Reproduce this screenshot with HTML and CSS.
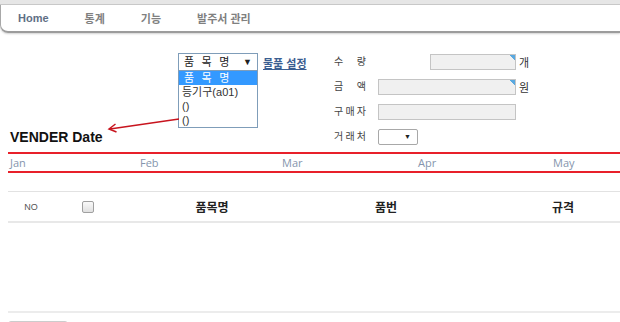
FILE: index.html
```html
<!DOCTYPE html>
<html lang="ko">
<head>
    <meta charset="UTF-8">
    <title>VENDER Date</title>
    <link rel="stylesheet" href="styles.css">
</head>
<body>

<div class="topbar"></div>
<nav class="menu">
    <a class="on">Home</a>
    <a>통계</a>
    <a>기능</a>
    <a>발주서 관리</a>
</nav>

<div class="page">
    <!-- 품목 선택 + 입력 -->
    <div class="head">
        <h2 class="title">VENDER Date</h2>
        <div class="pick">
            <div class="combo"><span>품목명</span><span class="caret">▼</span></div>
            <ul class="list">
                <li class="sel">품목명</li>
                <li>등기구(a01)</li>
                <li>()</li>
                <li>()</li>
            </ul>
        </div>
        <a class="setlink">물품 설정</a>
        <div class="fields">
            <span class="lbl"><span>수</span><span>량</span></span>
            <input class="box qty" type="text">
            <span class="unit">개</span>

            <span class="lbl"><span>금</span><span>액</span></span>
            <input class="box" type="text">
            <span class="unit">원</span>

            <span class="lbl"><span>구</span><span>매</span><span>자</span></span>
            <input class="box plain" type="text">
            <span></span>

            <span class="lbl"><span>거</span><span>래</span><span>처</span></span>
            <div class="vendor">▼</div>
            <span></span>
        </div>
        <svg class="arrow" width="200" height="110" viewBox="0 0 200 110">
            <line x1="171" y1="86" x2="102" y2="96" stroke="#c8141e" stroke-width="1.5"/>
            <polyline points="107.5,91 101,96 108.5,99" fill="none" stroke="#c8141e" stroke-width="1.5"/>
        </svg>
    </div>

    <!-- 월 -->
    <div class="timeline">
        <span style="width:130px">Jan</span>
        <span style="width:142px">Feb</span>
        <span style="width:136px">Mar</span>
        <span style="width:135px">Apr</span>
        <span>May</span>
    </div>

    <table class="grid">
        <colgroup>
            <col style="width:50px"><col style="width:60px"><col style="width:188px"><col style="width:160px"><col>
        </colgroup>
        <thead>
            <tr>
                <th class="no">NO</th>
                <th><span class="chk"></span></th>
                <th>품목명</th>
                <th>품번</th>
                <th class="last">규격</th>
            </tr>
        </thead>
        <tbody>
            <tr class="empty"><td colspan="5"></td></tr>
        </tbody>
    </table>

    <button class="btn"></button>
</div>

</body>
</html>
```

FILE: styles.css
```css
html, body {
    overflow: hidden;
}
body {
    margin: 0;
    font-family: "Liberation Sans", "Noto Sans CJK KR", sans-serif;
    background-color: #fff;
    color: #333;
}
.topbar {
    height: 4px;
    background-color: #e6e6e6;
    border-bottom: 1px solid #cacaca;
}
.menu {
    height: 26px;
    border-left: 1px solid #a8a8a8;
    border-bottom: 2px solid #9c9c9c;
    border-bottom-left-radius: 8px;
    box-shadow: 0 1px 2px rgba(0, 0, 0, 0.18);
    display: flex;
    align-items: center;
}
.menu a {
    padding: 0 18px;
    font-size: 11px;
    font-weight: bold;
    color: #808080;
}
.menu a.on {
    color: #5f6f85;
    padding-left: 17px;
}
.page {
    padding-left: 8px;
}
.head {
    position: relative;
    display: flex;
    align-items: flex-start;
    padding-top: 20px;
}
.title {
    width: 170px;
    align-self: flex-end;
    margin: 0;
    padding-left: 2px;
    box-sizing: border-box;
    font-size: 14px;
    line-height: 16px;
    color: #111;
}
.pick {
    position: relative;
    width: 85px;
}
.combo {
    width: 80px;
    height: 18px;
    box-sizing: border-box;
    border: 1px solid #7f9db9;
    padding-left: 5px;
    display: flex;
    justify-content: space-between;
    font-size: 11px;
    line-height: 16px;
    letter-spacing: 7.5px;
    color: #222;
}
.caret {
    letter-spacing: 0;
    font-size: 9px;
    margin-right: 5px;
}
.list {
    position: absolute;
    top: 17px;
    left: 0;
    width: 80px;
    box-sizing: border-box;
    margin: 0;
    padding: 0;
    list-style: none;
    border: 1px solid #7f9db9;
    background-color: #fff;
    font-size: 11px;
    color: #333;
}
.list li {
    height: 14px;
    line-height: 14px;
    padding-left: 3px;
}
.list li.sel {
    background-color: #3399ff;
    color: #fff;
    padding-left: 5px;
    letter-spacing: 7.5px;
}
.setlink {
    width: 71px;
    margin-top: 2px;
    font-size: 11px;
    font-weight: bold;
    color: #3b5e91;
    text-decoration: underline;
}
.fields {
    display: grid;
    grid-template-columns: 44px 138px auto;
    grid-auto-rows: 16px;
    row-gap: 9px;
    align-items: center;
    margin-top: 1px;
    font-size: 11px;
    color: #444;
}
.lbl {
    width: 32px;
    display: flex;
    justify-content: space-between;
    font-size: 10px;
    line-height: 16px;
}
.box {
    width: 138px;
    height: 16px;
    box-sizing: border-box;
    margin: 0;
    border: 1px solid #c4c4c4;
    background: linear-gradient(225deg, #5aa9e0 4px, transparent 4px), #f0f0f0;
}
.box.plain {
    background: #f0f0f0;
}
.box.qty {
    width: 86px;
    justify-self: end;
}
.unit {
    padding-left: 3px;
    color: #333;
}
.vendor {
    width: 40px;
    height: 16px;
    box-sizing: border-box;
    border: 1px solid #a8a8a8;
    border-radius: 2px;
    font-size: 7px;
    line-height: 14px;
    text-align: right;
    padding-right: 6px;
    color: #222;
}
.arrow {
    position: absolute;
    left: 0;
    top: 0;
}
.timeline {
    margin-top: 7px;
    height: 17px;
    border-top: 2px solid #e8202a;
    border-bottom: 2px solid #e8202a;
    display: flex;
    align-items: center;
    padding-left: 2px;
    font-family: "Open Sans", sans-serif;
    font-size: 11px;
    color: #8595ad;
}
.grid {
    margin-top: 18px;
    width: 100%;
    table-layout: fixed;
    border-collapse: collapse;
}
.grid thead tr {
    border-top: 1px solid #e2e2e2;
    border-bottom: 2px solid #e8e8e8;
}
.grid th {
    height: 29px;
    padding: 0;
    font-size: 12px;
    color: #222;
    text-align: center;
}
.grid th.no {
    font-size: 9px;
    font-weight: normal;
    color: #555;
    padding-right: 4px;
}
.grid th.last {
    padding-left: 40px;
}
.chk {
    display: inline-block;
    width: 10px;
    height: 10px;
    border: 1px solid #a0a0a0;
    border-radius: 2px;
    background: linear-gradient(#fafafa, #e0e0e0);
    vertical-align: middle;
}
.grid .empty td {
    height: 86px;
    border-bottom: 2px solid #ececec;
}
.btn {
    margin-top: 8px;
    width: 60px;
    height: 22px;
    border: 1px solid #cccccc;
    border-radius: 3px;
    background-color: #f8f8f8;
}
```
